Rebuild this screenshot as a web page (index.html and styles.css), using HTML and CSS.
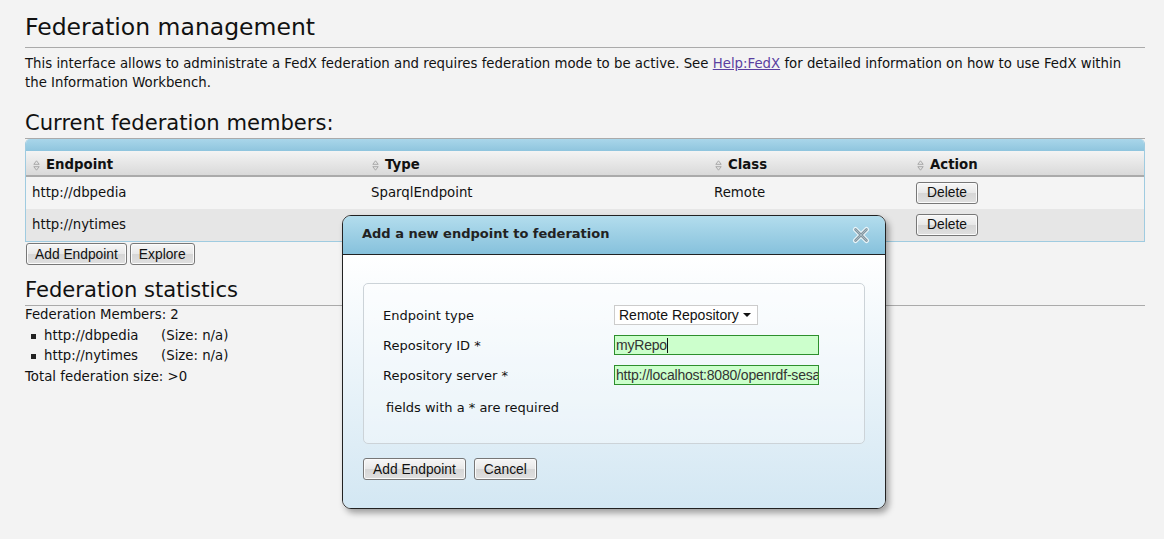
FILE: index.html
```html
<!DOCTYPE html>
<html>
<head>
<meta charset="utf-8">
<link rel="stylesheet" href="styles.css">
</head>
<body>
<div class="page">
  <h1 class="title">Federation management</h1>
  <p class="intro">This interface allows to administrate a FedX federation and requires federation mode to be active. See <a href="#" class="link">Help:FedX</a> for detailed information on how to use FedX within the Information Workbench.</p>

  <h2 class="section members-title">Current federation members:</h2>
  <div class="grid">
    <div class="grid-band"></div>
    <div class="row head">
      <div class="cell c1"><svg class="sort" width="7" height="11" viewBox="0 0 7 11"><path d="M3.5 0.8 L6.2 4.3 H0.8 Z M3.5 10.2 L6.2 6.7 H0.8 Z" fill="none" stroke="#a8a8a8" stroke-width="1"/></svg>Endpoint</div>
      <div class="cell c2"><svg class="sort" width="7" height="11" viewBox="0 0 7 11"><path d="M3.5 0.8 L6.2 4.3 H0.8 Z M3.5 10.2 L6.2 6.7 H0.8 Z" fill="none" stroke="#a8a8a8" stroke-width="1"/></svg>Type</div>
      <div class="cell c3"><svg class="sort" width="7" height="11" viewBox="0 0 7 11"><path d="M3.5 0.8 L6.2 4.3 H0.8 Z M3.5 10.2 L6.2 6.7 H0.8 Z" fill="none" stroke="#a8a8a8" stroke-width="1"/></svg>Class</div>
      <div class="cell c4"><svg class="sort" width="7" height="11" viewBox="0 0 7 11"><path d="M3.5 0.8 L6.2 4.3 H0.8 Z M3.5 10.2 L6.2 6.7 H0.8 Z" fill="none" stroke="#a8a8a8" stroke-width="1"/></svg>Action</div>
    </div>
    <div class="row odd">
      <div class="cell c1">http://dbpedia</div>
      <div class="cell c2">SparqlEndpoint</div>
      <div class="cell c3">Remote</div>
      <div class="cell c4"><button class="btn">Delete</button></div>
    </div>
    <div class="row even">
      <div class="cell c1">http://nytimes</div>
      <div class="cell c2">NativeStore</div>
      <div class="cell c3">Local</div>
      <div class="cell c4"><button class="btn">Delete</button></div>
    </div>
  </div>
  <div class="actions">
    <button class="btn">Add Endpoint</button>
    <button class="btn">Explore</button>
  </div>

  <h2 class="section stats-title">Federation statistics</h2>
  <div class="stats">
    <div>Federation Members: 2</div>
    <ul class="members">
      <li><span class="url">http://dbpedia</span>(Size: n/a)</li>
      <li><span class="url">http://nytimes</span>(Size: n/a)</li>
    </ul>
    <div>Total federation size: &gt;0</div>
  </div>
</div>

<div class="dialog">
  <div class="dialog-title">
    <span>Add a new endpoint to federation</span>
    <svg class="close" width="18" height="18" viewBox="0 0 18 18">
      <path d="M3.5 3.5 L14.5 14.5 M14.5 3.5 L3.5 14.5" stroke="#e9f4f8" stroke-width="5" stroke-linecap="round"/>
      <path d="M3.5 3.5 L14.5 14.5 M14.5 3.5 L3.5 14.5" stroke="#8497a1" stroke-width="2.6" stroke-linecap="round"/>
      <path d="M3.5 3.5 L14.5 14.5 M14.5 3.5 L3.5 14.5" stroke="#a9b9c1" stroke-width="1" stroke-linecap="round"/>
    </svg>
  </div>
  <div class="dialog-body">
    <div class="fieldset">
      <div class="frow">
        <label class="flabel">Endpoint type</label>
        <div class="select"><span>Remote Repository</span><span class="caret"></span></div>
      </div>
      <div class="frow">
        <label class="flabel">Repository ID *</label>
        <div class="input">myRepo<span class="cursor"></span></div>
      </div>
      <div class="frow">
        <label class="flabel">Repository server *</label>
        <div class="input">http://localhost:8080/openrdf-sesa</div>
      </div>
      <div class="note">fields with a * are required</div>
    </div>
    <div class="dialog-actions">
      <button class="btn">Add Endpoint</button>
      <button class="btn">Cancel</button>
    </div>
  </div>
</div>
</body>
</html>
```

FILE: styles.css
```css
html, body {
  margin: 0;
  padding: 0;
  background: #f3f3f3;
  font-family: "DejaVu Sans", Verdana, sans-serif;
  font-size: 13.3px;
  color: #111;
}
.page {
  padding: 12px 19px 0 25px;
}
.title {
  font-weight: normal;
  font-size: 23.5px;
  line-height: 30px;
  margin: 0;
  padding-bottom: 5px;
  border-bottom: 1px solid #aaa;
}
.intro {
  margin: 6px 0 0 0;
  line-height: 19px;
}
.link {
  color: #5a3fa0;
  text-decoration: underline;
}
.section {
  font-weight: normal;
  font-size: 21.1px;
  line-height: 27px;
  margin: 18px 0 0 0;
  padding-bottom: 2px;
  border-bottom: 1px solid #aaa;
}
.members-title {
  margin-top: 17px;
}
.grid {
  border: 1px solid #9fcbe0;
  border-top: none;
  border-radius: 5px 5px 0 0;
  overflow: hidden;
}
.grid-band {
  height: 12px;
  background: linear-gradient(#a9d6ea, #8fc5de);
}
.row {
  display: flex;
}
.cell {
  box-sizing: border-box;
  padding-left: 6px;
  display: flex;
  align-items: center;
}
.c1 { width: 339px; }
.c2 { width: 343px; }
.c3 { width: 202px; }
.c4 { flex: 1; }
.head {
  height: 24px;
  background: linear-gradient(#f4f4f4, #d9d9d9);
  border-bottom: 2px solid #aaa;
  font-weight: bold;
}
.head .cell { padding: 3px 0 0 7px; }
.sort {
  margin-right: 6px;
  margin-top: 1px;
}
.odd {
  height: 32px;
  background: #f4f4f4;
}
.even {
  height: 32px;
  background: #e6e6e6;
}
.odd .cell, .even .cell { padding-bottom: 1px; }
.btn {
  font-family: "Liberation Sans", Arial, sans-serif;
  font-size: 13.8px;
  color: #111;
  height: 22px;
  padding: 0 8px;
  border: 1px solid #777;
  border-radius: 3px;
  background: linear-gradient(#f6f6f6 0%, #e8e8e8 50%, #d6d6d6 51%, #e0e0e0 100%);
  box-shadow: inset 0 0 0 1px #fbfbfb;
  cursor: default;
}
.c4 .btn { padding: 0 10px; }
.actions {
  display: flex;
  gap: 3px;
  margin-top: 1px;
  margin-left: 1px;
}
.stats-title {
  margin-top: 11px;
}
.stats {
  line-height: 20.7px;
  margin-top: -1px;
}
.members {
  list-style: none;
  margin: 0;
  padding: 0 0 0 6px;
}
.members li {
  display: flex;
  align-items: center;
}
.members li::before {
  content: "";
  width: 5px;
  height: 5px;
  background: #222;
  margin-right: 8px;
}
.url {
  width: 117px;
}
.dialog {
  position: absolute;
  left: 342px;
  top: 215px;
  width: 542px;
  height: 292px;
  border: 1px solid #222;
  border-radius: 9px;
  overflow: hidden;
  box-shadow: 3px 4px 6px rgba(0,0,0,0.35);
  display: flex;
  flex-direction: column;
  font-size: 13px;
}
.dialog-title {
  height: 39px;
  border-bottom: 1px solid #222;
  background: linear-gradient(#b3dded, #86c1dc);
  display: flex;
  align-items: center;
  justify-content: space-between;
  padding: 0 15px 4px 19px;
  box-sizing: border-box;
  font-weight: bold;
  color: #222;
}
.close {
  margin-top: 4px;
}
.dialog-body {
  flex: 1;
  background: linear-gradient(#ffffff, #d3e7f3);
  padding: 28px 20px 0 20px;
}
.fieldset {
  height: 161px;
  border: 1px solid #ccd3d8;
  border-radius: 5px;
  background: rgba(255,255,255,0.35);
  padding: 21px 0 0 19px;
  box-sizing: border-box;
}
.frow {
  display: flex;
  align-items: center;
  height: 20px;
  margin-bottom: 10px;
}
.flabel {
  width: 231px;
}
.select {
  font-family: "Liberation Sans", Arial, sans-serif;
  font-size: 14px;
  width: 144px;
  height: 20px;
  box-sizing: border-box;
  border: 1px solid #ccc;
  background: #fff;
  display: flex;
  align-items: center;
  justify-content: space-between;
  padding: 0 6px 0 4px;
}
.caret {
  width: 0;
  height: 0;
  border-left: 4px solid transparent;
  border-right: 4px solid transparent;
  border-top: 4px solid #111;
}
.input {
  font-family: "Liberation Sans", Arial, sans-serif;
  font-size: 14px;
  width: 205px;
  height: 20px;
  box-sizing: border-box;
  border: 1px solid #2d8f2d;
  background: #ccffcc;
  color: #333;
  padding: 0 1px;
  display: flex;
  align-items: center;
  overflow: hidden;
  white-space: nowrap;
  letter-spacing: -0.2px;
}
.cursor {
  width: 1px;
  height: 15px;
  background: #111;
}
.note {
  margin-top: 15px;
  padding-left: 3px;
}
.dialog-actions {
  display: flex;
  gap: 8px;
  margin-top: 14px;
}
.dialog-actions .btn { padding: 0 9px; }
```
